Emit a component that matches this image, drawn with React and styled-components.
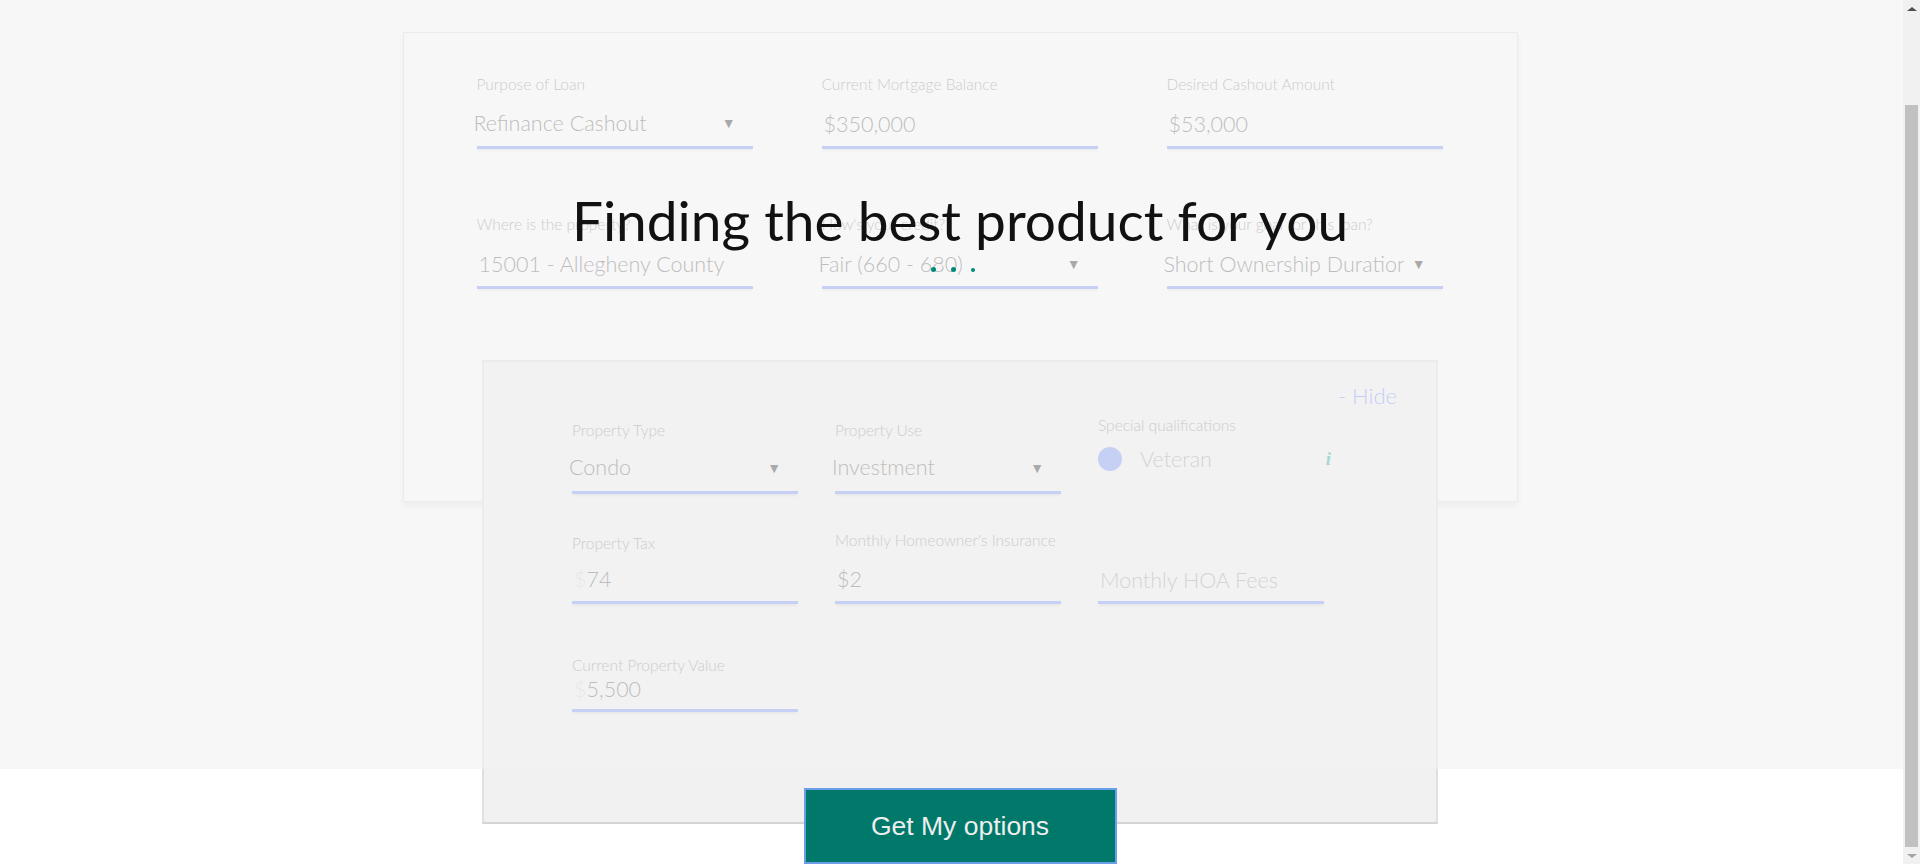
import React from "react";
import styled, { createGlobalStyle } from "styled-components";

const GlobalStyle = createGlobalStyle`
  html, body {
    overflow: hidden;
  }
  body {
    margin: 0;
    background: #fff;
    font-family: Lato, "Open Sans", sans-serif;
  }
  * {
    box-sizing: border-box;
  }
`;

const Page = styled.div`
  padding-top: 32px;
`;

const Card = styled.div`
  width: 1115px;
  height: 470px;
  margin: 0 auto;
  padding: 42px 73px 0;
  background: #fff;
  border: 1px solid #e0e0e0;
  box-shadow: 0 4px 6px rgba(0, 0, 0, 0.1);
`;

const FieldGrid = styled.div`
  display: grid;
  grid-template-columns: repeat(3, ${(p) => p.$col}px);
  column-gap: ${(p) => p.$gap}px;
  row-gap: ${(p) => p.$rowGap || 0}px;
  margin-top: ${(p) => p.$top || 0}px;
  align-items: end;
`;

const Field = styled.div`
  display: flex;
  flex-direction: column;
  justify-content: flex-end;
`;

const Label = styled.label`
  font-size: 15.5px;
  line-height: 18px;
  font-weight: 300;
  color: #8a8a8a;
  margin-bottom: ${(p) => (p.$gap === undefined ? 12 : p.$gap)}px;
  white-space: nowrap;
`;

const Control = styled.div`
  display: flex;
  align-items: center;
  height: ${(p) => p.$h || 44}px;
  padding-bottom: ${(p) => p.$pb ?? 4}px;
  border-bottom: 3px solid #7e99f7;
  box-shadow: 0 3px 2px -1px rgba(0, 0, 0, 0.1);
  font-size: 21.5px;
  font-weight: 300;
  color: #666;
`;

const Value = styled.span`
  flex: 1;
  min-width: 0;
  overflow: hidden;
  white-space: nowrap;
  margin-left: ${(p) => (p.$select ? -3 : 2)}px;
  color: ${(p) => (p.$placeholder ? "#a0a0a0" : "#666")};
`;

const Prefix = styled.span`
  color: #d6d6d6;
`;

const Arrow = styled.span`
  font-size: 14px;
  color: #333;
  margin: 0 17px 0 8px;
`;

const Panel = styled.div`
  position: relative;
  width: 956px;
  height: 464px;
  margin: -142px auto 0;
  padding: 22px 39px 0 88px;
  background: #f1f1f1;
  border: 2px solid #e0e0e0;
  border-bottom-color: #d4d4d4;
`;

const HideLink = styled.div`
  text-align: right;
  font-size: 22px;
  line-height: 24px;
  font-weight: 300;
  color: #7c91fa;
  cursor: pointer;
`;

const CheckRow = styled.div`
  display: flex;
  align-items: center;
  width: 233px;
  height: 30px;
  margin-top: 10px;
  margin-bottom: 20px;
`;

const Circle = styled.span`
  width: 24px;
  height: 24px;
  border-radius: 50%;
  background: #7e99f7;
`;

const CheckText = styled.span`
  margin-left: 18px;
  font-size: 21.5px;
  font-weight: 300;
  color: #a0a0a0;
`;

const InfoMark = styled.span`
  margin-left: auto;
  font-family: "Liberation Serif", serif;
  font-style: italic;
  font-weight: bold;
  font-size: 19px;
  color: #2fae99;
`;

const SubmitButton = styled.button`
  position: relative;
  display: block;
  width: 313px;
  height: 76px;
  margin: -36px auto 0;
  background: #00796b;
  border: 2px solid #6b9de8;
  color: #eee;
  font-family: "Liberation Sans", Arial, sans-serif;
  font-size: 26.5px;
  cursor: pointer;
`;

const Overlay = styled.div`
  position: absolute;
  top: 0;
  left: 0;
  right: 0;
  height: 769px;
  z-index: 10;
  padding-top: 187px;
  background: rgba(242, 242, 242, 0.62);
  display: flex;
  flex-direction: column;
  align-items: center;
`;

const Heading = styled.h1`
  margin: 0;
  font-size: 55px;
  line-height: 66px;
  font-weight: 400;
  color: #111;
`;

const Dots = styled.div`
  display: flex;
  align-items: center;
  gap: 15px;
  margin: 14px 14px 0 0;
`;

const Dot = styled.span`
  width: ${(p) => p.$size}px;
  height: ${(p) => p.$size}px;
  border-radius: 50%;
  background: #00897b;
`;

/* browser scrollbar as seen in the screenshot */
const ScrollBar = styled.div`
  position: fixed;
  top: 0;
  right: 0;
  bottom: 0;
  width: 17px;
  z-index: 20;
  background: #f1f1f1;
  display: flex;
  flex-direction: column;
`;

const ScrollArrow = styled.div`
  height: 17px;
  display: flex;
  align-items: center;
  justify-content: center;
  &::before {
    content: "";
    border-left: 5px solid transparent;
    border-right: 5px solid transparent;
    ${(p) =>
      p.$down
        ? "border-top: 4px solid #a3a3a3;"
        : "border-bottom: 4px solid #505050;"}
  }
`;

const ScrollTrack = styled.div`
  flex: 1;
  display: flex;
  flex-direction: column;
  justify-content: flex-end;
  padding: 0 2px;
`;

const ScrollThumb = styled.div`
  height: 742px;
  background: #c1c1c1;
`;

const SelectField = ({ label, value, pb = 6 }) => (
  <Field>
    <Label>{label}</Label>
    <Control $pb={pb}>
      <Value $select>{value}</Value>
      <Arrow>▼</Arrow>
    </Control>
  </Field>
);

const InputField = ({ label, value, prefix, gap, h, pb }) => (
  <Field>
    {label && <Label $gap={gap}>{label}</Label>}
    <Control $h={h} $pb={pb}>
      <Value>
        {prefix && <Prefix>{prefix}</Prefix>}
        {value}
      </Value>
    </Control>
  </Field>
);

export default function App() {
  return (
    <>
      <GlobalStyle />
      <Page>
        <Card>
          <FieldGrid $col={276} $gap={69} $rowGap={66}>
            <SelectField label="Purpose of Loan" value="Refinance Cashout" />
            <InputField label="Current Mortgage Balance" value="$350,000" />
            <InputField label="Desired Cashout Amount" value="$53,000" />
            <InputField label="Where is the property?" value="15001 - Allegheny County" />
            <SelectField label="How's your credit?" value="Fair (660 - 680)" pb={4} />
            <SelectField
              label="What is your goal for this loan?"
              value="Short Ownership Duration"
              pb={4}
            />
          </FieldGrid>
        </Card>

        <Panel>
          <HideLink>- Hide</HideLink>
          <FieldGrid $col={226} $gap={37} $top={8}>
            <Field>
              <Label $gap={11}>Property Type</Label>
              <Control $pb={7}>
                <Value $select>Condo</Value>
                <Arrow>▼</Arrow>
              </Control>
            </Field>
            <Field>
              <Label $gap={11}>Property Use</Label>
              <Control $pb={7}>
                <Value $select>Investment</Value>
                <Arrow>▼</Arrow>
              </Control>
            </Field>
            <Field>
              <Label $gap={0}>Special qualifications</Label>
              <CheckRow>
                <Circle />
                <CheckText>Veteran</CheckText>
                <InfoMark>i</InfoMark>
              </CheckRow>
            </Field>
          </FieldGrid>

          <FieldGrid $col={226} $gap={37} $top={37}>
            <InputField label="Property Tax" prefix="$" value="74" gap={8} pb={4} />
            <InputField label="Monthly Homeowner's Insurance" value="$2" gap={11} pb={4} />
            <Field>
              <Control $pb={2}>
                <Value $placeholder>Monthly HOA Fees</Value>
              </Control>
            </Field>
          </FieldGrid>

          <FieldGrid $col={226} $gap={37} $top={52}>
            <InputField
              label="Current Property Value"
              prefix="$"
              value="5,500"
              gap={0}
              h={38}
              pb={6}
            />
          </FieldGrid>
        </Panel>

        <SubmitButton>Get My options</SubmitButton>
      </Page>

      <Overlay>
        <Heading>Finding the best product for you</Heading>
        <Dots>
          <Dot $size={5} />
          <Dot $size={5} />
          <Dot $size={4} />
        </Dots>
      </Overlay>

      <ScrollBar>
        <ScrollArrow />
        <ScrollTrack>
          <ScrollThumb />
        </ScrollTrack>
        <ScrollArrow $down />
      </ScrollBar>
    </>
  );
}
